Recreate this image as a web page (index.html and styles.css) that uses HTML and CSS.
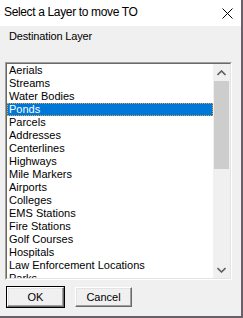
FILE: index.html
```html
<!DOCTYPE html>
<html>
<head>
<meta charset="utf-8">
<link rel="stylesheet" href="styles.css">
</head>
<body>
<div class="window">
  <div class="titlebar">
    <span class="title">Select a Layer to move TO</span>
    <svg class="close" width="11" height="11" viewBox="0 0 11 11"><path d="M0.5 0.5 L10.5 10.5 M10.5 0.5 L0.5 10.5" stroke="#000" stroke-width="1" fill="none"/></svg>
  </div>
  <div class="content">
    <div class="label">Destination Layer</div>
    <div class="listbox">
      <div class="listinner">
        <div class="items">
          <div class="item">Aerials</div>
          <div class="item">Streams</div>
          <div class="item">Water Bodies</div>
          <div class="item selected">Ponds</div>
          <div class="item">Parcels</div>
          <div class="item">Addresses</div>
          <div class="item">Centerlines</div>
          <div class="item">Highways</div>
          <div class="item">Mile Markers</div>
          <div class="item">Airports</div>
          <div class="item">Colleges</div>
          <div class="item">EMS Stations</div>
          <div class="item">Fire Stations</div>
          <div class="item">Golf Courses</div>
          <div class="item">Hospitals</div>
          <div class="item">Law Enforcement Locations</div>
          <div class="item">Parks</div>
        </div>
        <div class="scrollbar">
          <div class="sb-btn"><svg width="9" height="6" viewBox="0 0 9 6"><path d="M0.5 5 L4.5 1 L8.5 5" stroke="#606060" stroke-width="1.6" fill="none"/></svg></div>
          <div class="sb-track"><div class="sb-thumb"></div></div>
          <div class="sb-btn"><svg width="9" height="6" viewBox="0 0 9 6"><path d="M0.5 1 L4.5 5 L8.5 1" stroke="#606060" stroke-width="1.6" fill="none"/></svg></div>
        </div>
      </div>
    </div>
    <div class="buttons">
      <div class="default-frame"><div class="btn">OK</div></div>
      <div class="btn">Cancel</div>
    </div>
  </div>
</div>
</body>
</html>
```
FILE: styles.css
```css
html, body {
  margin: 0;
  padding: 0;
}
body {
  background: #6a6068;
  width: 243px;
  height: 318px;
  overflow: hidden;
}
.window {
  width: 241px;
  height: 316px;
  background: #f0f0f0;
  font-family: "Liberation Sans", Arial, sans-serif;
  color: #000;
}
.titlebar {
  height: 26px;
  background: #fff;
  display: flex;
  align-items: flex-start;
  justify-content: space-between;
}
.title {
  font-size: 12px;
  line-height: 14px;
  letter-spacing: -0.35px;
  padding-top: 5px;
  padding-left: 4px;
}
.close {
  margin-top: 8px;
  margin-right: 8px;
}
.content {
  padding: 4px 0 0 5px;
}
.label {
  font-size: 11px;
  line-height: 13px;
  letter-spacing: -0.15px;
  padding-left: 4px;
  height: 13px;
}
.listbox {
  margin-top: 19px;
  width: 225px;
  height: 216px;
  border-top: 1px solid #a0a0a0;
  border-left: 1px solid #a0a0a0;
  border-right: 1px solid #fff;
  border-bottom: 1px solid #fff;
}
.listinner {
  height: 214px;
  border-top: 1px solid #696969;
  border-left: 1px solid #696969;
  border-right: 1px solid #e3e3e3;
  border-bottom: 1px solid #e3e3e3;
  background: #fff;
  display: flex;
  overflow: hidden;
}
.items {
  flex: 1;
  overflow: hidden;
}
.item {
  height: 13px;
  line-height: 13px;
  font-size: 11px;
  padding-left: 2px;
  white-space: nowrap;
}
.item.selected {
  background: #0078d7;
  color: #fff;
  outline: 1px dotted #e8a040;
  outline-offset: -1px;
}
.scrollbar {
  width: 17px;
  background: #f0f0f0;
  display: flex;
  flex-direction: column;
}
.sb-btn {
  height: 17px;
  display: flex;
  align-items: center;
  justify-content: center;
}
.sb-track {
  flex: 1;
  padding: 0 1px;
}
.sb-thumb {
  height: 88px;
  background: #cdcdcd;
}
.buttons {
  display: flex;
  align-items: center;
  gap: 10px;
  margin-top: 6px;
  padding-left: 1px;
}
.default-frame {
  border: 1px solid #000;
  display: flex;
}
.btn {
  width: 55px;
  height: 18px;
  background: #f0f0f0;
  border-top: 1px solid #fff;
  border-left: 1px solid #fff;
  border-right: 1px solid #696969;
  border-bottom: 1px solid #696969;
  box-shadow: inset -1px -1px 0 #a0a0a0, inset 1px 1px 0 #e3e3e3;
  font-size: 11px;
  display: flex;
  align-items: center;
  justify-content: center;
}
```
